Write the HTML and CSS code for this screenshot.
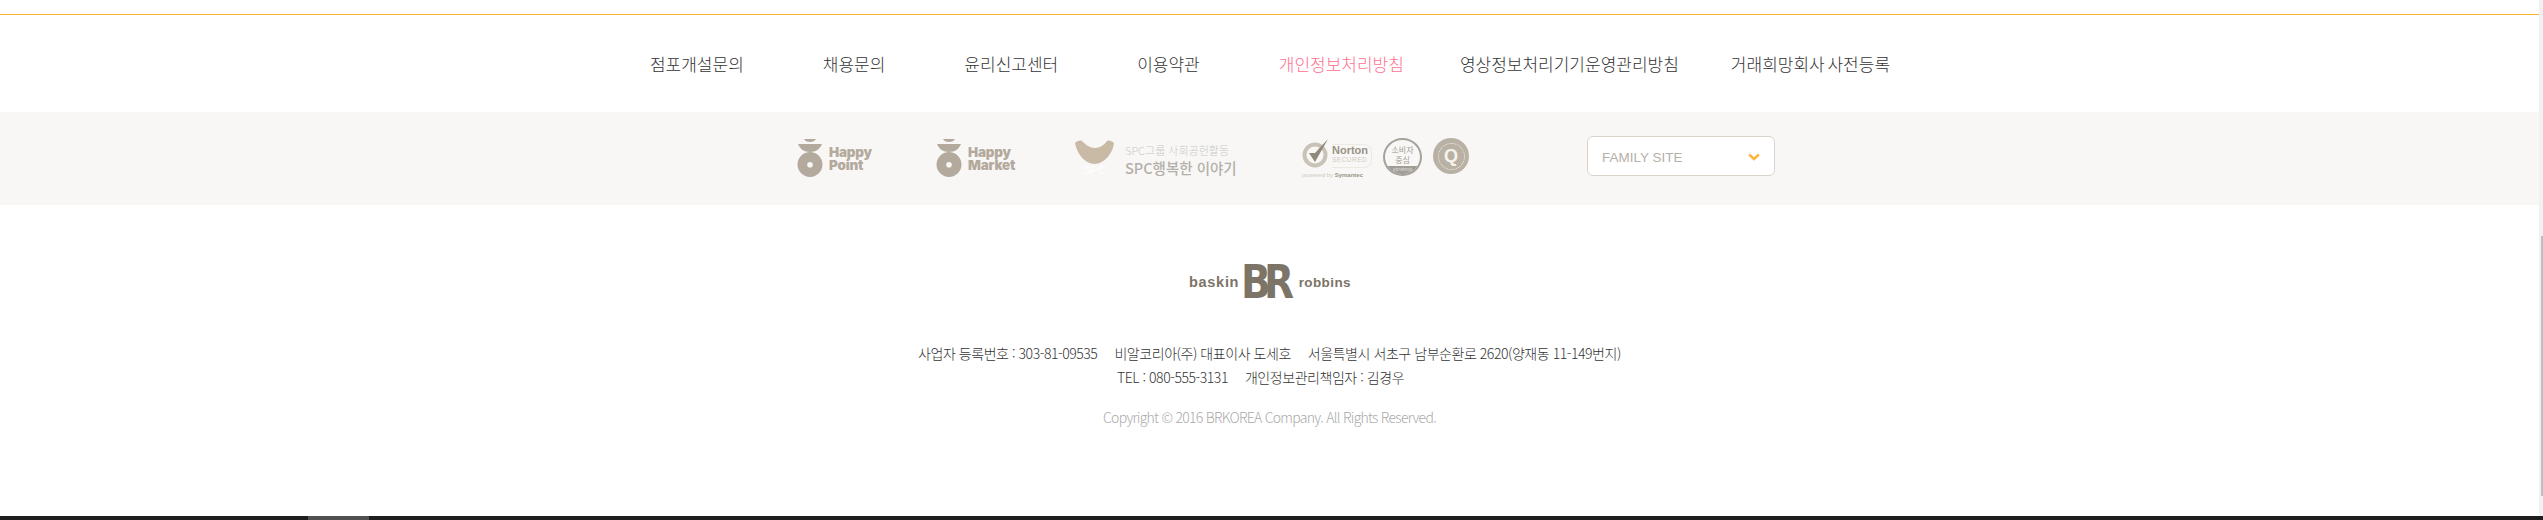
FILE: index.html
```html
<!DOCTYPE html>
<html lang="ko">
<head>
<meta charset="utf-8">
<title>Baskin Robbins footer</title>
<link rel="stylesheet" href="styles.css">
</head>
<body>
<div class="page">
  <div class="content">
    <nav class="nav">
      <a>점포개설문의</a>
      <a>채용문의</a>
      <a>윤리신고센터</a>
      <a>이용약관</a>
      <a class="hot">개인정보처리방침</a>
      <a class="tight">영상정보처리기기운영관리방침</a>
      <a class="tight last">거래희망회사 사전등록</a>
    </nav>
    <div class="band">
      <div class="brand point">
        <svg class="happy" viewBox="0 0 26 38"><path d="M7 0h12c-1 2-3 3-6 3S8 2 7 0z"/><path d="M1 5h24c-2 5-6 8-12 8S3 10 1 5z"/><path fill-rule="evenodd" d="M13 13a12.500 12.500 0 1 1 0 25 12.500 12.500 0 0 1 0-25zm0 10a2.800 2.800 0 1 0 0 5.600 2.800 2.800 0 0 0 0-5.600z"/></svg>
        <span class="brand-name">Happy<br>Point</span>
      </div>
      <div class="brand market">
        <svg class="happy" viewBox="0 0 26 38"><path d="M7 0h12c-1 2-3 3-6 3S8 2 7 0z"/><path d="M1 5h24c-2 5-6 8-12 8S3 10 1 5z"/><path fill-rule="evenodd" d="M13 13a12.500 12.500 0 1 1 0 25 12.500 12.500 0 0 1 0-25zm0 10a2.800 2.800 0 1 0 0 5.600 2.800 2.800 0 0 0 0-5.600z"/></svg>
        <span class="brand-name">Happy<br>Market</span>
      </div>
      <div class="brand spc">
        <div class="spc-mark">
          <svg class="leaf" viewBox="0 0 39 24"><path d="M0 3c2-2 5-3 7-2 4 4 8 7 13 7s9-3 12-7c2-1 5 0 7 2-1 9-8 20-19 21C10 24 2 14 0 3z"/></svg>
          <span class="spc-word">SPC</span>
        </div>
        <div class="spc-text">
          <span class="spc-small">SPC그룹 사회공헌활동</span>
          <span class="spc-big">SPC행복한 이야기</span>
        </div>
      </div>
      <div class="certs">
        <div class="norton">
          <div class="norton-main">
            <svg class="check" viewBox="0 0 30 30"><circle cx="13" cy="17" r="10.500" fill="none" stroke="#c9c2b6" stroke-width="4"/><path d="M7 15l6 9 L26 1 L13 15z" fill="#8f887b"/></svg>
            <div class="norton-words"><b>Norton</b><i>SECURED</i></div>
          </div>
          <span class="norton-by">powered by <b>Symantec</b></span>
        </div>
        <div class="ccm"><span class="ccm-text">소비자<br>중심</span><span class="ccm-bar">공정거래위원회</span></div>
        <div class="qmark"><span class="q-ring">Q</span></div>
      </div>
      <div class="family">
        <span>FAMILY SITE</span>
        <svg class="chev" viewBox="0 0 12 8"><path d="M1.200 1.500L6 6l4.800-4.500" fill="none" stroke="#fdb43f" stroke-width="2.400"/></svg>
      </div>
    </div>
    <div class="info">
      <div class="logo"><span class="logo-side">baskin</span><span class="logo-br">BR</span><span class="logo-side robbins">robbins</span></div>
      <p class="line first"><span>사업자 등록번호 : 303-81-09535</span><span>비알코리아(주) 대표이사 도세호</span><span>서울특별시 서초구 남부순환로 2620(양재동 11-149번지)</span></p>
      <p class="line second"><span>TEL : 080-555-3131</span><span>개인정보관리책임자 : 김경우</span></p>
      <p class="copy">Copyright © 2016 BRKOREA Company. All Rights Reserved.</p>
    </div>
  </div>
  <div class="scrollbar"><div class="thumb"></div></div>
</div>
<div class="taskbar"><div class="task-active"></div></div>
</body>
</html>
```
FILE: styles.css
```css
* { box-sizing: border-box; }
html, body { margin: 0; padding: 0; height: 520px; overflow: hidden; background: #fff; }
body { font-family: "Noto Sans CJK KR", "Liberation Sans", sans-serif; display: flex; flex-direction: column; }
.page { display: flex; height: 516px; }
.content { flex: 1; padding-top: 14px; min-width: 0; }
.nav { height: 98px; border-top: 1px solid #fdb52e; display: flex; justify-content: center; align-items: center; gap: 79px; padding-left: 1px; font-size: 17px; font-weight: 300; color: #333; white-space: nowrap; }
.hot { color: #ff6f90; }
.tight { margin-left: -23px; }
.last { margin-left: -27px; word-spacing: -2px; }
.band { height: 93px; background: #f8f7f5; display: flex; padding: 25px 0 0 797px; align-items: flex-start; }
.brand { display: flex; }
.happy { width: 26px; height: 38px; fill: #b3aa9d; flex: none; display: block; margin-top: 2px; }
.brand-name { margin: 9px 0 0 6px; font: 900 13.500px/13px Inter, "Liberation Sans", sans-serif; letter-spacing: -.2px; color: #b3aa9d; }
.point { width: 139px; }
.market { width: 139px; }
.spc { width: 227px; }
.spc-mark { width: 39px; position: relative; margin-top: 3px; }
.leaf { width: 39px; height: 24px; fill: #c9baa6; display: block; }
.spc-word { display: block; font: 11px/12px "Liberation Sans", sans-serif; color: #fff; text-align: center; }
.spc-text { margin-left: 11px; display: flex; flex-direction: column; padding-top: 5px; white-space: nowrap; }
.spc-small { font-size: 11px; line-height: 16px; font-weight: 300; color: #c9c9c9; }
.spc-big { font-size: 14.500px; line-height: 19px; color: #b4b0a9; font-weight: 500; }
.certs { display: flex; width: 285px; gap: 11px; padding-top: 1px; }
.norton { width: 69px; display: flex; flex-direction: column; }
.norton-main { display: flex; height: 29px; position: relative; border-radius: 9px; }
.check { width: 30px; height: 30px; flex: none; }
.norton-words { display: flex; flex-direction: column; margin: 6px 0 0 0; border: 1px solid #ece9e3; border-left: 0; border-radius: 0 8px 8px 0; padding-right: 3px; height: 24px; }
.norton-words b { font: 700 11px/11px "Liberation Sans", sans-serif; color: #989185; }
.norton-words i { font: normal 6.500px/8px "Liberation Sans", sans-serif; color: #d0cbc2; letter-spacing: .5px; }
.norton-by { font: 6px/8px "Liberation Sans", sans-serif; color: #cfc9bf; margin-top: 4px; white-space: nowrap; }
.norton-by b { color: #9b9488; }
.ccm { width: 39px; height: 38px; border: 2px solid #a5a19b; border-radius: 50%; overflow: hidden; display: flex; flex-direction: column; align-items: center; margin-left: 1px; background: #f8f7f5; }
.ccm-text { font-size: 8px; line-height: 10px; color: #a19d96; text-align: center; padding-top: 5px; height: 26px; }
.ccm-bar { display: block; width: 100%; height: 8px; font-size: 3px; line-height: 8px; color: #eee; background: #a09c95; text-align: center; }
.qmark { width: 36px; height: 36px; border-radius: 50%; background: #b9b1a4; display: flex; align-items: center; justify-content: center; }
.q-ring { width: 27px; height: 27px; border: 1px dotted #f3efe8; border-radius: 50%; font: 700 18px/25px "Liberation Sans", sans-serif; color: #f6f3ee; text-align: center; }
.family { width: 188px; height: 40px; margin-top: -1px; background: #fff; border: 1px solid #d9d3cb; border-radius: 6px; display: flex; align-items: center; justify-content: space-between; padding: 2px 14px 0 14px; font: 13.500px "Liberation Sans", sans-serif; color: #b5b0a8; }
.chev { width: 12px; height: 8px; display: block; }
.info { display: flex; flex-direction: column; align-items: center; }
.logo { margin-top: 60px; height: 34px; display: flex; align-items: center; padding-left: 1px; color: #7c7467; font-family: "Liberation Sans", sans-serif; font-weight: 700; white-space: nowrap; }
.logo-side { font-size: 14.500px; letter-spacing: .7px; }
.robbins { font-size: 13.500px; letter-spacing: .4px; }
.logo-br { font: 700 46px/34px "DejaVu Sans", sans-serif; letter-spacing: -8px; margin: 0 7px 0 -2px; transform: scaleX(.85); }
.line { margin: 0; height: 24px; line-height: 24px; font-size: 14px; font-weight: 300; color: #333; letter-spacing: -.45px; display: flex; gap: 17px; white-space: nowrap; }
.first { margin-top: 42px; }
.second { padding-right: 18px; }
.copy { margin: 16px 0 0; font-size: 14px; line-height: 24px; font-weight: 300; color: #aaa; letter-spacing: -.73px; }
.scrollbar { width: 4px; height: 100%; background: #f1f1f1; flex: none; padding: 236px 0 0 2px; }
.thumb { height: 260px; background: #bfbfbf; }
.taskbar { height: 4px; background: #1e1e1e; padding-left: 308px; flex: none; }
.task-active { width: 61px; height: 4px; background: #505050; }
```
